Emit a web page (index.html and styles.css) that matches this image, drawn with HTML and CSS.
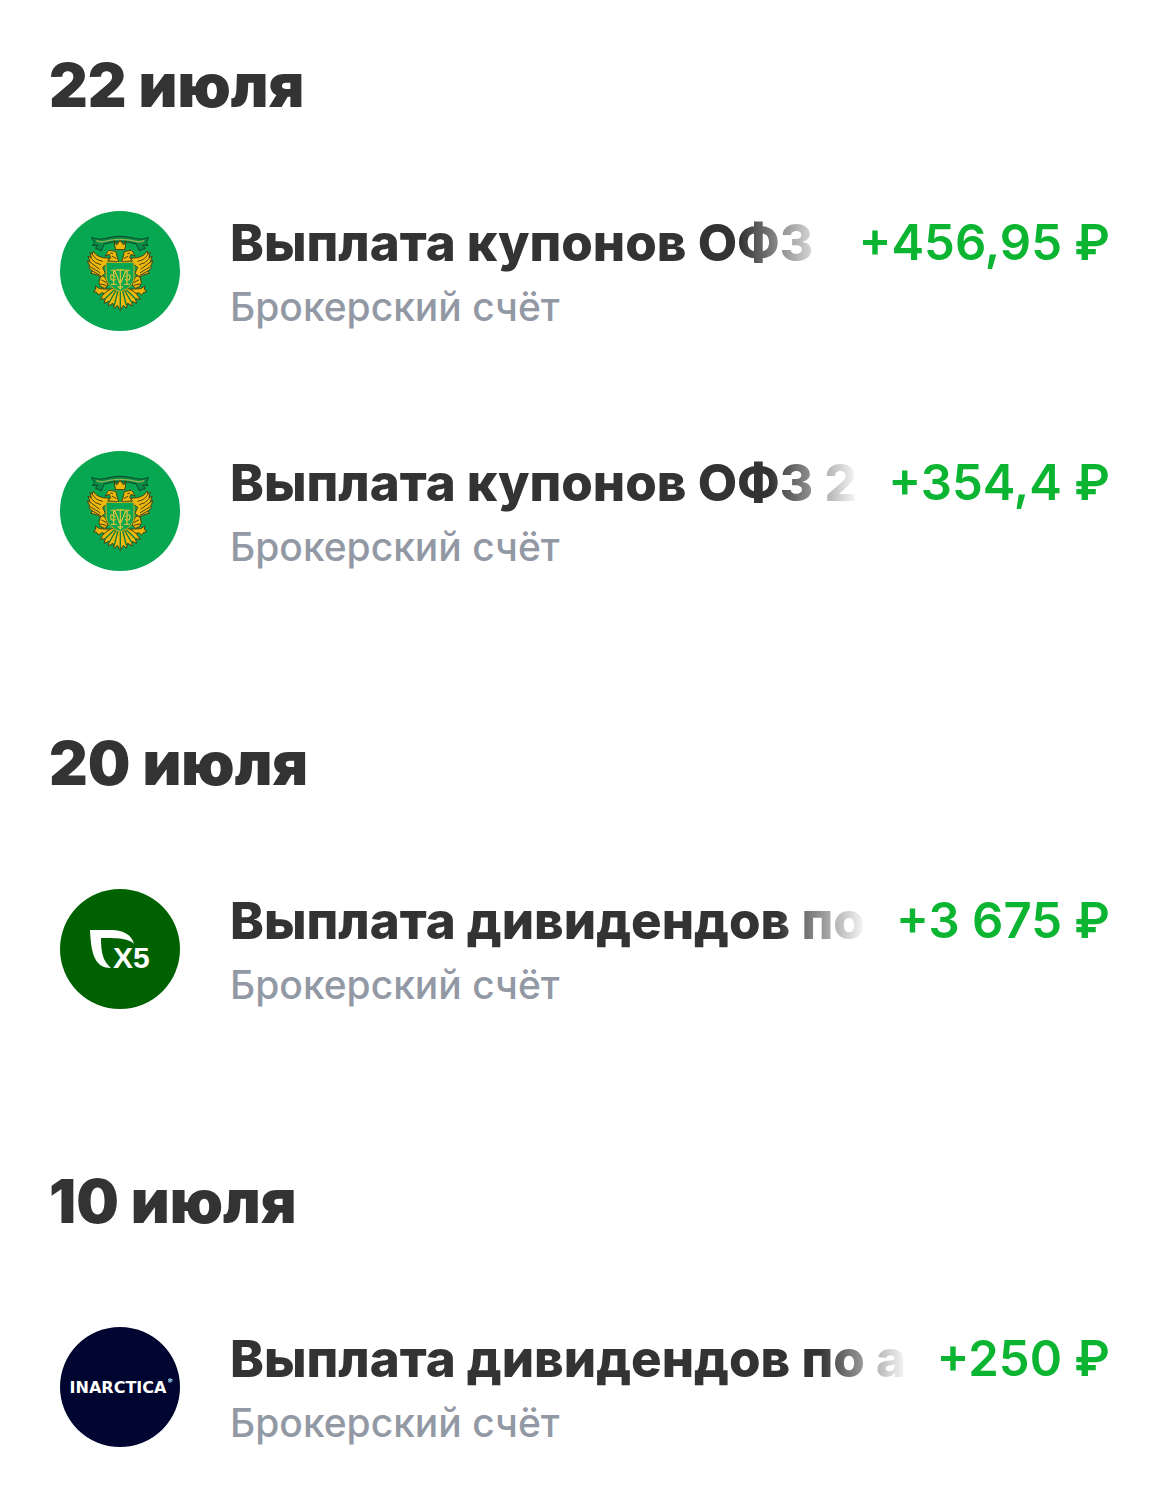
FILE: index.html
```html
<!DOCTYPE html>
<html lang="ru">

<head>
  <meta charset="UTF-8">
  <meta name="viewport" content="width=device-width, initial-scale=1">
  <title>Операции</title>
  <link rel="stylesheet" href="styles.css">
</head>

<body>
  <main class="feed">
    <section class="day">
      <h2>22 июля</h2>
      <ul class="list">
        <li class="item">
          <svg class="logo" viewBox="0 0 120 120" aria-hidden="true">
            <circle cx="60" cy="60" r="60" fill="#07a650"/>
            <g id="crest" transform="translate(20 14) scale(.3333)" stroke-linejoin="round" stroke-linecap="round">
              <!-- лента -->
              <path d="M36 38 Q58 47 78 40 Q120 28 164 40 Q184 47 205 38 L199 53 L204 62 L188 60 L196 70 L178 77 L169 57 Q120 43 73 57 L64 77 L46 70 L54 60 L38 62 L43 53Z" fill="#078c45" stroke="#12452b" stroke-width="3"/>
              <path d="M51 47 Q62 53 79 48 Q120 39 163 48 Q179 53 191 47" fill="none" stroke="#a6b94f" stroke-width="4" stroke-dasharray="3 4"/>
              <!-- крылья -->
              <g id="wing" fill="#eeb90d" stroke="#493f13" stroke-width="3">
                <path d="M86 99 C64 100 46 92 40 78 L37 87 L30 82 L34 98 L24 94 L30 110 L22 108 L30 125 L26 128 L37 138 L33 145 L49 149 L63 156 L76 145 L68 127 L85 115Z"/>
                <path d="M37 88 Q46 105 67 109 M32 99 Q45 117 62 119 M29 111 L58 132 M32 126 L60 143 M37 138 L61 151" fill="none"/>
                <path d="M62 155 Q72 149 78 162 L84 181 L74 190 L61 184 L57 173Z"/>
                <path d="M65 165 L78 172 M62 177 L78 181" fill="none"/>
                <path d="M57 190 L46 183 L48 193 L40 200 L50 202 L56 210 L65 203 L79 207 L89 192 L74 192Z"/>
                <path d="M81 84 Q83 72 97 78 Q111 77 110 91 L116 110 L83 108 L92 98 L88 88 L76 93Z"/>
                <path d="M92 84 L98 86 M97 94 L108 100" fill="none"/>
              </g>
              <use href="#wing" transform="translate(241 0) scale(-1 1)"/>
              <!-- хвост -->
              <g fill="#eeb90d" stroke="#493f13" stroke-width="3">
                <path d="M103 189 Q82 193 68 211 L61 223 L76 221 L72 235 L87 229 L85 243 L99 235 L103 250 L112 241 L121 257 L130 241 L139 250 L143 235 L157 243 L155 229 L170 235 L166 221 L181 223 Q164 194 138 189 L121 197Z"/>
                <path d="M105 193 L77 220 M109 195 L88 231 M114 197 L103 240 M121 199 V253 M128 197 L139 240 M133 195 L154 231 M137 193 L165 220" fill="none" stroke="#077c3c" stroke-width="4"/>
                <path d="M103 48 L110 60 L120 46 L131 60 L138 48 L135 74 H107Z"/>
              </g>
              <!-- щит с вензелем -->
              <path d="M79 112 H162 V157 Q163 185 121 200 Q79 185 79 157Z" fill="#07a650" stroke="#d9ae16" stroke-width="3"/>
              <path d="M94 136 H104 L119 175 M148 136 H138 L122 175 M101 137 V177 M141 137 V177 M94 178 H108 M134 178 H148 M109 135 H133 M121 133 V190 M105 155 Q90 143 92 157 Q93 169 106 164 M137 155 Q152 143 150 157 Q149 169 136 164 M114 184 L121 192 L128 184" fill="none" stroke="#d3c03a" stroke-width="4"/>
            </g>
          </svg>
          <div class="info">
            <div class="top">
              <h3 class="title">Выплата купонов ОФЗ</h3>
              <span class="sum">+456,95 ₽</span>
            </div>
            <p class="account">Брокерский счёт</p>
          </div>
        </li>
        <li class="item">
          <svg class="logo" viewBox="0 0 120 120" aria-hidden="true">
            <circle cx="60" cy="60" r="60" fill="#07a650"/>
            <use href="#crest"/>
          </svg>
          <div class="info">
            <div class="top">
              <h3 class="title">Выплата купонов ОФЗ 2</h3>
              <span class="sum">+354,4 ₽</span>
            </div>
            <p class="account">Брокерский счёт</p>
          </div>
        </li>
      </ul>
    </section>

    <section class="day">
      <h2>20 июля</h2>
      <ul class="list">
        <li class="item">
          <svg class="logo" viewBox="0 0 120 120" role="img" aria-label="X5">
            <circle cx="60" cy="60" r="60" fill="#006100"/>
            <path d="M30 41 H52 C63 41 72 46 74 55 C69 50 62 49 41 49 C41 64 43 72 51 79 C36 79 31 67 30 41Z" fill="#fff"/>
            <text class="x5" x="53" y="79">X5</text>
          </svg>
          <div class="info">
            <div class="top">
              <h3 class="title">Выплата дивидендов по</h3>
              <span class="sum">+3 675 ₽</span>
            </div>
            <p class="account">Брокерский счёт</p>
          </div>
        </li>
      </ul>
    </section>

    <section class="day">
      <h2>10 июля</h2>
      <ul class="list">
        <li class="item">
          <svg class="logo" viewBox="0 0 120 120" role="img" aria-label="INARCTICA">
            <circle cx="60" cy="60" r="60" fill="#00062f"/>
            <text class="inarctica" x="58" y="66" text-anchor="middle">INARCTICA</text>
            <path d="M110 51 V56 M108 53 H113 M108 52 L112 55 M112 52 L108 55" stroke="#8cc5df" stroke-width="1"/>
          </svg>
          <div class="info">
            <div class="top">
              <h3 class="title">Выплата дивидендов по а</h3>
              <span class="sum">+250 ₽</span>
            </div>
            <p class="account">Брокерский счёт</p>
          </div>
        </li>
      </ul>
    </section>
  </main>
</body>

</html>
```
FILE: styles.css
```css
* {
  box-sizing: border-box;
  margin: 0;
  padding: 0;
}

body {
  background-color: #fff;
  color: #333;
  font-family: Inter, "Liberation Sans", sans-serif;
}

.feed {
  display: flex;
  flex-direction: column;
  gap: 148px;
  padding: 49px 60px 41px 49px;
}

.day h2 {
  margin-bottom: 90px;
  font-size: 60px;
  font-weight: 900;
  line-height: 72px;
}

.list {
  display: flex;
  flex-direction: column;
  gap: 112px;
  list-style: none;
}

.item {
  display: flex;
  align-items: flex-start;
  gap: 50px;
  padding-left: 11px;
}

.logo {
  flex: none;
  width: 120px;
  height: 120px;
}

.info {
  flex: 1;
  min-width: 0;
}

.top {
  display: flex;
  gap: 28px;
  line-height: 64px;
  white-space: nowrap;
}

/* длинное название растворяется перед суммой */
.title {
  flex: 1;
  min-width: 0;
  overflow: hidden;
  font-size: 51px;
  font-weight: 800;
  -webkit-mask-image: linear-gradient(to left, transparent, #000 90px);
  mask-image: linear-gradient(to left, transparent, #000 90px);
}

.sum {
  color: #0bb532;
  font-size: 49px;
  font-weight: 600;
}

.account {
  color: #9299a5;
  font-size: 39px;
  font-weight: 500;
  line-height: 64px;
}

.x5 {
  fill: #fff;
  font: 700 30px "Liberation Sans", sans-serif;
}

.inarctica {
  fill: #fff;
  font: 700 16px "DejaVu Sans", sans-serif;
}
```
